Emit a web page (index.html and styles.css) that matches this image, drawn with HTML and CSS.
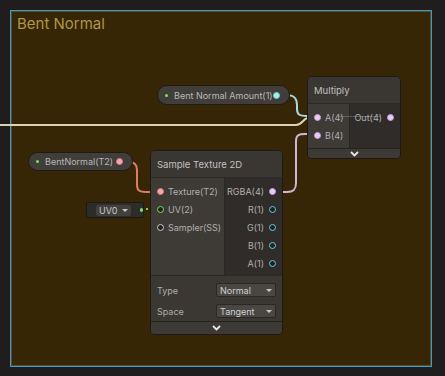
FILE: index.html
```html
<!DOCTYPE html>
<html lang="en">
<head>
  <meta charset="UTF-8" />
  <title>Bent Normal</title>
  <link rel="stylesheet" href="styles.css">
</head>
<body>
  <svg class="wires" width="445" height="376" viewBox="0 0 445 376">
    <path d="M0 125 H296 C303 125 303 117 311 117 H317" stroke="#d8d4b4" />
    <path d="M275 95 H286 C295 95 297 99 297 105 V109 C297 115 300 116 307 116 H317" stroke="#a9d9df" />
    <path d="M273 192 H287 C294 192 296 189 296 183 V141 C296 135 299 134 305 134 H317" stroke="#d6b2d8" />
    <path d="M118 162 H129 C135 162 137 165 137 170 V185 C137 191 140 192 146 192 H158" stroke="#de7c69" />
    <path d="M138 209 H158" stroke="#78cc55" stroke-dasharray="2 2" />
  </svg>

  <div class="group">
    <div class="group-title">Bent Normal</div>

    <!-- property pills -->
    <div class="pill pill-amount">
      <span class="dot"></span>
      <span class="pill-label">Bent Normal Amount(1)</span>
      <span class="port port-cyan filled"></span>
    </div>

    <div class="pill pill-texture">
      <span class="dot"></span>
      <span class="pill-label">BentNormal(T2)</span>
      <span class="port port-red filled"></span>
    </div>

    <!-- multiply -->
    <div class="node node-multiply">
      <div class="node-header">Multiply</div>
      <div class="node-body">
        <div class="inputs">
          <div class="row"><span class="port port-lilac filled"></span>A(4)</div>
          <div class="row"><span class="port port-lilac filled"></span>B(4)</div>
        </div>
        <div class="outputs">
          <div class="row">Out(4)<span class="port port-lilac filled"></span></div>
        </div>
        <span class="pass-line"></span>
      </div>
      <div class="node-footer"><svg width="9" height="6" viewBox="0 0 9 6"><path d="M1 1 L4.5 4.5 L8 1" /></svg></div>
    </div>

    <!-- sample texture 2d -->
    <div class="node node-sample">
      <div class="node-header">Sample Texture 2D</div>
      <div class="node-body">
        <div class="inputs">
          <div class="row"><span class="port port-red filled"></span>Texture(T2)</div>
          <div class="row"><span class="port port-green"></span>UV(2)</div>
          <div class="row"><span class="port port-white"></span>Sampler(SS)</div>
        </div>
        <div class="outputs">
          <div class="row">RGBA(4)<span class="port port-lilac filled"></span></div>
          <div class="row">R(1)<span class="port port-cyan"></span></div>
          <div class="row">G(1)<span class="port port-cyan"></span></div>
          <div class="row">B(1)<span class="port port-cyan"></span></div>
          <div class="row">A(1)<span class="port port-cyan"></span></div>
        </div>
      </div>
      <div class="node-controls">
        <div class="control">
          <span class="control-label">Type</span>
          <span class="select">Normal<span class="caret"></span></span>
        </div>
        <div class="control">
          <span class="control-label">Space</span>
          <span class="select">Tangent<span class="caret"></span></span>
        </div>
      </div>
      <div class="node-footer"><svg width="9" height="6" viewBox="0 0 9 6"><path d="M1 1 L4.5 4.5 L8 1" /></svg></div>
    </div>

    <!-- inline uv input -->
    <div class="inline-uv">
      <span class="uv-select">UV0<span class="caret"></span></span>
      <span class="dot"></span>
    </div>
  </div>
</body>
</html>
```

FILE: styles.css
```css
body {
  margin: 0;
  background: #201d1f;
  font-family: Inter, "Liberation Sans", sans-serif;
  font-size: 9px;
  color: #b8b8b8;
  position: relative;
  height: 376px;
  overflow: hidden;
}

.wires {
  position: absolute;
  top: 0;
  left: 0;
  z-index: 1;
  fill: none;
  stroke-width: 2;
}

.group {
  box-sizing: border-box;
  position: relative;
  margin: 10px 0 0 10px;
  width: 422px;
  height: 357px;
  border: 1px solid #3c9ad7;
  background: #372605;
  box-shadow: inset 0 0 0 1px #5e4d1c;
}

.group-title {
  padding: 3px 0 0 6px;
  font-size: 15px;
  color: #ab9747;
}

/* pills */
.pill {
  position: absolute;
  z-index: 2;
  box-sizing: border-box;
  display: flex;
  align-items: center;
  height: 20px;
  padding: 0 9px 0 7px;
  background: #413e3a;
  border: 1px solid #1d1b19;
  border-radius: 10px;
  color: #b8b8b8;
}

.pill-amount {
  left: 146px;
  top: 74px;
  width: 133px;
}

.pill-texture {
  left: 17px;
  top: 141px;
  width: 105px;
  height: 19px;
}

.pill-label {
  flex: 1;
  margin-left: 6px;
}

.dot {
  width: 3px;
  height: 3px;
  border-radius: 50%;
  background: #7ee05a;
}

/* ports */
.port {
  box-sizing: border-box;
  display: inline-block;
  width: 7px;
  height: 7px;
  border-radius: 50%;
  border: 1.5px solid #aaa;
  background: #222;
}

.port-cyan { border-color: #5fd0dc; }
.port-red { border-color: #e2767c; }
.port-green { border-color: #7ee05a; }
.port-white { border-color: #c8c8c8; }
.port-lilac { border-color: #c59ade; }

.port.filled { background: #e8e8e8; }
.port-cyan.filled { background: #aee9ef; }
.port-red.filled { background: #f0aab0; }
.port-lilac.filled { background: #e6cdf2; }

/* nodes */
.node {
  position: absolute;
  z-index: 2;
  box-sizing: border-box;
  display: flex;
  flex-direction: column;
  background: #3b3834;
  border: 1px solid #1c1a18;
  border-radius: 5px;
  overflow: hidden;
}

.node-multiply {
  left: 296px;
  top: 65px;
  width: 94px;
  height: 83px;
}

.node-sample {
  left: 139px;
  top: 139px;
  width: 133px;
  height: 185px;
}

.node-header {
  height: 26px;
  padding-left: 6px;
  display: flex;
  align-items: center;
  font-size: 9.5px;
  color: #c0c0c0;
  background: #3a3733;
}

.node-body {
  position: relative;
  display: flex;
  border-top: 1px solid #2c2a27;
}

.node-multiply .node-body {
  height: 44px;
}

.node-sample .node-body {
  height: 97px;
}

/* faint pass-through wire drawn behind the multiply ports */
.pass-line {
  position: absolute;
  left: 30px;
  right: 20px;
  top: 12px;
  height: 1px;
  background: rgba(180, 170, 175, 0.35);
}

.inputs {
  background: #3e3a36;
  padding-top: 4px;
}

.node-multiply .inputs {
  width: 41px;
}

.node-sample .inputs {
  width: 73px;
}

.outputs {
  flex: 1;
  background: #2f2c29;
  padding-top: 4px;
  border-left: 1px solid #2a2825;
}

.row {
  position: relative;
  z-index: 1;
  height: 18px;
  display: flex;
  align-items: center;
  gap: 4px;
  color: #b0b0b0;
}

.inputs .row {
  padding-left: 6px;
}

.outputs .row {
  justify-content: flex-end;
  padding-right: 6px;
  gap: 5px;
}

.node-controls {
  height: 46px;
  padding: 7px 6px 0 6px;
  box-sizing: border-box;
  background: #3b3834;
  border-top: 1px solid #2c2a27;
}

.control {
  display: flex;
  align-items: center;
  justify-content: space-between;
  height: 14px;
  margin-bottom: 7px;
}

.control-label {
  color: #acacac;
}

.select {
  box-sizing: border-box;
  display: flex;
  align-items: center;
  justify-content: space-between;
  width: 60px;
  height: 14px;
  padding: 0 3px;
  background: #4a4743;
  border: 1px solid #2a2825;
  border-radius: 2px;
  color: #cfcfcf;
}

.caret {
  width: 0;
  height: 0;
  border-left: 3px solid transparent;
  border-right: 3px solid transparent;
  border-top: 3px solid #c8c8c8;
}

.node-footer {
  flex: 1;
  display: flex;
  align-items: center;
  justify-content: center;
  background: #3d3a36;
  border-top: 1px solid #26241f;
}

.node-footer svg {
  fill: none;
  stroke: #e6e6e6;
  stroke-width: 1.8;
}

/* inline uv */
.inline-uv {
  position: absolute;
  z-index: 2;
  left: 75px;
  top: 191px;
  box-sizing: border-box;
  width: 58px;
  height: 16px;
  display: flex;
  align-items: center;
  gap: 9px;
  padding-left: 9px;
  background: #2e2c29;
  border: 1px solid #1c1a18;
  border-radius: 2px;
}

.uv-select {
  box-sizing: border-box;
  display: flex;
  align-items: center;
  gap: 4px;
  height: 11px;
  padding: 0 3px;
  background: #43403c;
  border-radius: 2px;
  color: #c8c8c8;
}

.inline-uv .dot {
  width: 4px;
  height: 4px;
}
```
